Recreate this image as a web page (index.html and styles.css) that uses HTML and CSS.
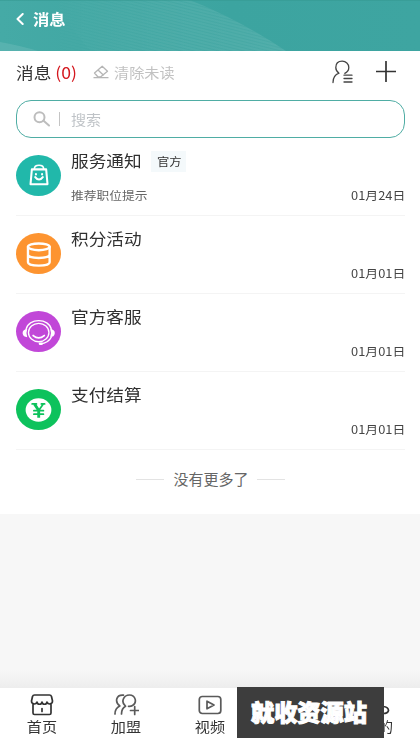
FILE: index.html
```html
<!DOCTYPE html>
<html lang="zh-CN">
<head>
<meta charset="utf-8">
<title>消息</title>
<link rel="stylesheet" href="styles.css">
</head>
<body>
<div class="app">
  <header class="topbar">
    <svg class="waves" viewBox="0 0 420 51" preserveAspectRatio="none">
      <defs>
        <linearGradient id="glow" x1="0" x2="1" y1="0" y2="0"><stop offset="0" stop-color="#fff" stop-opacity="0"/><stop offset="1" stop-color="#fff" stop-opacity=".07"/></linearGradient>
        <linearGradient id="fade" x1="0" x2="1" y1="0" y2="0"><stop offset="0" stop-color="#000"/><stop offset=".6" stop-color="#fff"/></linearGradient>
        <mask id="soft"><rect width="300" height="51" fill="url(#fade)"/></mask>
        <pattern id="lines" width="80" height="3" patternUnits="userSpaceOnUse" patternTransform="rotate(14)"><path d="M0 1H80" stroke="#fff" stroke-opacity=".09" stroke-width="1"/></pattern>
      </defs>
      <path d="M50 0H190Q240 20 286 51H90Z" fill="url(#glow)"/>
      <path d="M60 0H190Q240 20 286 51H60Z" fill="url(#lines)" mask="url(#soft)"/>
      <path d="M0 42Q22 46 38 51H0Z" fill="#fff" fill-opacity=".1"/>
      <path d="M0 0H420" stroke="#359790"/>
    </svg>
    <svg class="back" viewBox="0 0 8 12"><path d="M6.700 1 1.500 6l5.200 5"/></svg>
    <h1><span class="wide">消息</span></h1>
  </header>

  <main class="sheet">
    <div class="heading">
      <h2><span class="wide">消息 <em>(0)</em></span></h2>
      <svg class="eraser" viewBox="0 0 16 14"><path d="M1.500 8 9.200 1.200 14.500 6.200 7.500 12H5zM5 5l5.300 5M1 12.700H15"/></svg>
      <span class="clear"><span class="wide">清除未读</span></span>
      <svg class="contacts" viewBox="0 0 22 24"><path d="M2 22.500C2 17.500 4.500 14.500 8 13.200C5.800 11.800 4.800 10 4.800 7.500C4.800 3.500 7.500 1.200 11.200 1.200S17.800 3.800 17.800 7.500C17.800 10 16.500 12 13.800 13.300"/><path d="M13 15.200H21M13 18.500H21M13 22H21"/></svg>
      <svg class="plus" viewBox="0 0 20 20"><path d="M10 0V20M0 10H20"/></svg>
    </div>

    <div class="search">
      <svg viewBox="0 0 17 16"><circle cx="6.500" cy="6.200" r="5"/><path d="M10.300 9.600 16 14.500"/></svg>
      <i></i>
      <span class="wide">搜索</span>
    </div>

    <ul class="list">
      <li>
        <svg class="avatar" viewBox="0 0 44 40"><ellipse cx="22" cy="20" rx="22" ry="20" fill="#21b8aa"/><g fill="none" stroke="#fff" stroke-width="2" stroke-linejoin="round" stroke-linecap="round"><path d="M15.500 14H29.500L30.800 28.500H14.200Z"/><path d="M18 13.500C18 8.800 27 8.800 27 13.500" stroke-width="1.600"/><path d="M19.500 18.500V19M25.500 18.500V19M18.800 21.500Q22.500 26.500 26.200 21.500"/></g></svg>
        <div class="info"><h3><span class="wide">服务通知</span><b><span class="wide">官方</span></b></h3><p><span class="wide">推荐职位提示</span></p></div>
        <time><span class="wide">01月24日</span></time>
      </li>
      <li>
        <svg class="avatar" viewBox="0 0 44 40"><ellipse cx="22" cy="20" rx="22" ry="20" fill="#fd9430"/><g fill="none" stroke="#fff" stroke-width="2.300"><ellipse cx="22.300" cy="13.500" rx="10.600" ry="3.300"/><path d="M11.700 13.500V28.500C11.700 33 32.900 33 32.900 28.500V13.500M11.700 21C11.700 25.500 32.900 25.500 32.900 21"/></g></svg>
        <div class="info"><h3><span class="wide">积分活动</span></h3></div>
        <time><span class="wide">01月01日</span></time>
      </li>
      <li>
        <svg class="avatar" viewBox="0 0 44 40"><ellipse cx="22" cy="20" rx="22" ry="20" fill="#c147d8"/><g fill="none" stroke="#fff" stroke-width="1.300" stroke-linecap="round"><ellipse cx="22.200" cy="21" rx="10" ry="9"/><path d="M9.800 18C12 6.500 32.400 6.500 34.600 18M34.500 25.500Q31.500 31.500 24 32"/><path d="M16.800 24Q22.200 28.500 27.600 24" stroke-width="1.800"/><path d="M23.500 32H25" stroke-width="2.600"/></g><path d="M11 17.500Q6 18 6.500 22 7 25.500 11 25.500 9.500 21 11 17.500ZM33.400 17.500Q38.400 18 37.900 22 37.400 25.500 33.400 25.500 34.900 21 33.400 17.500Z" fill="#fff"/></svg>
        <div class="info"><h3><span class="wide">官方客服</span></h3></div>
        <time><span class="wide">01月01日</span></time>
      </li>
      <li>
        <svg class="avatar" viewBox="0 0 44 40"><ellipse cx="22" cy="20" rx="22" ry="20" fill="#0dc25c"/><ellipse cx="22" cy="20.500" rx="12.600" ry="11.400" fill="#fff"/><path d="M15.800 14.500H20M24.800 14.500H28M26.500 14.800 22.200 21M17.500 21.200H26.800M17.500 24.600H26.800" fill="none" stroke="#0dc25c" stroke-width="1.700"/><path d="M18 14.500 22.200 21V28" stroke="#0dc25c" stroke-width="2.800" stroke-linecap="butt"/></svg>
        <div class="info"><h3><span class="wide">支付结算</span></h3></div>
        <time><span class="wide">01月01日</span></time>
      </li>
    </ul>

    <div class="end"><i></i><span>没有更多了</span><i></i></div>
  </main>

  <div class="shade"></div>
  <nav class="tabs">
    <a><svg viewBox="0 0 26 22"><path d="M5.500 1H20.500Q22 1 22.500 2.500L23.500 7C23.500 10.500 19 11 18 8C17.500 11 13.500 11 13 8C12.500 11 8.500 11 8 8C7 11 2.500 10.500 2.500 7L3.500 2.500Q4 1 5.500 1ZM4 10V19Q4 20.500 5.500 20.500H20.500Q22 20.500 22 19V10M13 14.500V17.500"/></svg><span class="wide">首页</span></a>
    <a><svg class="soft" viewBox="0 0 26 22"><path d="M8.500 20C8.500 15.500 10 13.500 12.500 12.200C7.500 8 10.500 1 16.500 1C22.500 1 24.500 8.500 19.500 11.500Q18 12.500 15.500 12.300M10.500 1.200C3 .5 1.500 8 6.800 12C3.500 13.500 2 16.500 2 20M17.500 16.500H26M21.700 12.500V20.500"/></svg><span class="wide">加盟</span></a>
    <a><svg class="video" viewBox="0 0 26 22"><rect x="2.300" y="2.500" width="21.500" height="17" rx="3"/><path d="M10 7.200 17 11 10 14.800Z"/></svg><span class="wide">视频</span></a>
    <a></a>
    <a><svg viewBox="0 0 26 22"><circle cx="13" cy="7.500" r="5"/><path d="M3 20.500Q4 12.500 13 12.500H18Q23.500 13 23.500 16.500Q23 19.500 18 19.500"/></svg><span class="wide">我的</span></a>
  </nav>
  <div class="watermark">就收资源站</div>
</div>
</body>
</html>
```

FILE: styles.css
```css
* { box-sizing: border-box; margin: 0; padding: 0; }
body { width: 420px; height: 746px; overflow: hidden; background: #f7f7f7; color: #333; font-family: "Noto Sans CJK SC", sans-serif; }
svg { flex: none; fill: none; stroke-linecap: round; stroke-linejoin: round; }
i { display: block; }
.app { position: relative; display: flex; flex-direction: column; height: 746px; }
.wide { display: inline-block; transform: scaleX(1.09); transform-origin: left center; white-space: nowrap; }

.topbar { position: relative; display: flex; align-items: center; flex: none; height: 51px; padding: 0 0 14px 16px; background: linear-gradient(90deg, #45aaa6, #3ca4a0 55%, #3ea5a1); }
.waves { position: absolute; inset: 0; width: 420px; height: 51px; }
.back { position: relative; width: 8px; height: 12px; stroke: #fff; stroke-width: 2; }
.topbar h1 { position: relative; margin-left: 9px; font-size: 15px; line-height: 20px; font-weight: 700; color: #fff; }

.sheet { flex: none; height: 463px; padding: 0 15px 0 16px; background: #fff; }
.heading { display: flex; align-items: center; height: 41px; margin-bottom: 8px; }
.heading h2 { width: 77px; font-size: 16.200px; line-height: 24px; font-weight: 400; color: #333; }
.heading em { font-style: normal; color: #d4171e; }
.eraser { width: 16px; height: 14px; stroke: #b5b5b5; stroke-width: 1.300; }
.clear { margin-left: 5px; font-size: 13.900px; line-height: 20px; color: #c2c2c2; }
.contacts { width: 22px; height: 24px; margin-left: auto; stroke: #444; stroke-width: 1.300; }
.plus { width: 20px; height: 21px; margin: 0 9px 0 23px; stroke: #333; stroke-width: 1.700; }

.search { display: flex; align-items: center; height: 38px; padding-left: 16px; border: 1.500px solid #4fada4; border-radius: 15px; font-size: 13.800px; line-height: 20px; color: #bfc3c7; }
.search svg { width: 17px; height: 16px; stroke: #bdbdbd; stroke-width: 2; }
.search i { width: 1px; height: 14px; margin: 0 11px 0 9px; background: #c4c4c4; }

.list { list-style: none; }
.list li { display: flex; height: 78px; border-bottom: 1px solid #f4f4f4; }
.avatar { width: 45px; height: 41px; margin-top: 17px; }
.info { flex: 1; margin-left: 10px; padding-top: 10px; }
.info h3 { display: flex; align-items: center; height: 24px; font-size: 16.200px; line-height: 24px; font-weight: 400; color: #303030; }
.info b { width: 35px; height: 21px; margin: 2px 0 0 15px; padding-left: 6px; background: #f4f9fb; font-size: 11.300px; line-height: 20px; font-weight: 400; color: #333; }
.info p { margin-top: 14px; font-size: 11.700px; line-height: 18px; color: #666; }
.list time { width: 54px; margin-top: 48px; font-size: 11.800px; line-height: 18px; color: #444; }
.end { display: flex; align-items: center; justify-content: center; gap: 8px; height: 58px; font-size: 15px; line-height: 22px; color: #666; }
.end i { width: 28px; height: 1px; background: #e3e3e3; }
.end span { padding-left: 1px; }

.shade { height: 18px; margin-top: auto; background: linear-gradient(#f7f7f7, #ededed); }
.tabs { display: flex; flex: none; height: 58px; background: #fff; }
.tabs a { display: flex; flex: 1; flex-direction: column; align-items: center; padding-top: 6px; font-size: 13.900px; line-height: 20px; color: #333; }
.tabs svg { width: 26px; height: 22px; stroke: #333; stroke-width: 1.700; }
.tabs .soft { stroke: #5a5a5a; }
.tabs .video { stroke: #5a5a5a; }
.tabs .wide { transform-origin: center; }
.watermark { position: absolute; left: 237px; top: 687px; width: 147px; height: 51px; padding-left: 14px; background: #3d3d3d; color: #fff; font-size: 23.200px; line-height: 49px; font-weight: 900; -webkit-text-stroke: 1px #fff; white-space: nowrap; }
```
